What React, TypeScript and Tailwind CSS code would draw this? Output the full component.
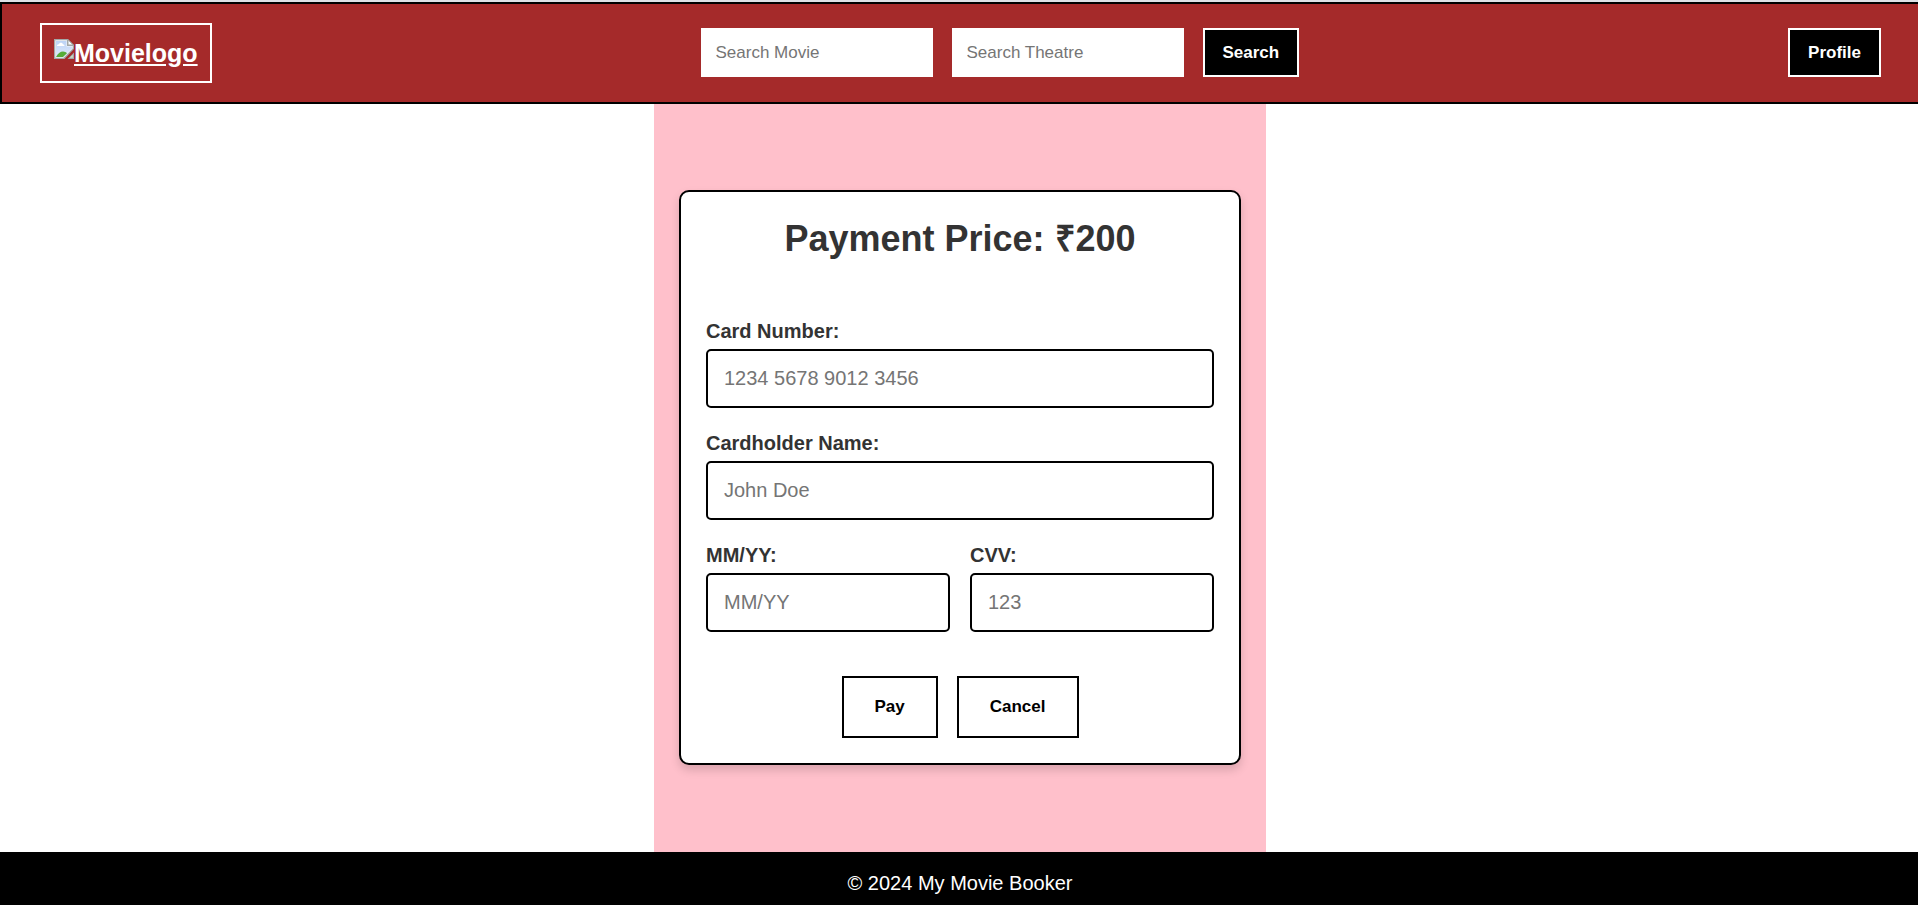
import type { InputHTMLAttributes } from "react";

function BrokenImageIcon() {
  return (
    <svg width="20" height="20" viewBox="0 0 20 20" className="shrink-0" aria-hidden="true">
      <defs>
        <linearGradient id="sky" x1="0" y1="0" x2="0" y2="1">
          <stop offset="0" stopColor="#bcd3f5" />
          <stop offset="1" stopColor="#dfe9fb" />
        </linearGradient>
      </defs>
      <path d="M0 0H14L20 6V10L10.500 20H0Z" fill="#a3a8a8" />
      <path d="M1.300 1.300H13V7H18.700V9.600L9.500 18.700H1.300Z" fill="#f5f8fd" />
      <path d="M2 2H12.500V7.500H18V9.500L9 18H2Z" fill="url(#sky)" />
      <path d="M3 7C3 5.500 4.500 5.300 5 5.300C5.300 3.300 8.500 3.300 8.900 5.300C10 5.300 10.500 6 10.500 7Z" fill="#fff" />
      <path d="M2 18C3.500 14.500 6.500 12.500 9 12.500C10.800 12.500 12 13.300 13 14.200L9 18Z" fill="#55ac38" />
      <path d="M14 0.800V6H19.200Z" fill="#fafafa" stroke="#a3a8a8" strokeWidth="1" />
      <path d="M20 13.500V20H13.500Z" fill="#a3a8a8" />
      <path d="M18.800 15.800V18.800H15.700Z" fill="#cfe0c8" />
    </svg>
  );
}

type FieldProps = InputHTMLAttributes<HTMLInputElement> & { id: string; label: string };

function Field({ id, label, ...rest }: FieldProps) {
  return (
    <div className="mb-6 flex min-w-0 flex-1 flex-col gap-[6px]">
      <label htmlFor={id} className="text-[20px] leading-[23px] font-bold">
        {label}
      </label>
      <input
        id={id}
        className="w-full rounded-[5px] border-2 border-black bg-white px-4 py-4 text-[20px] leading-[23px] text-black placeholder:text-[#757575]"
        {...rest}
      />
    </div>
  );
}

const searchInput =
  "h-[49px] w-[232px] bg-white px-[15px] text-[17px] text-black placeholder:text-[#757575]";
const darkButton =
  "h-[49px] border-2 border-white bg-black px-[18px] text-[17px] font-bold text-white";
const lightButton =
  "h-[62px] border-2 border-black bg-white px-[31px] text-[17px] font-bold text-black";

export default function App() {
  return (
    <div className="flex min-h-screen flex-col border-t-2 border-[#dee1e6] bg-white font-['Liberation_Sans',Arial,sans-serif] text-[#333333]">
      <header className="flex items-center justify-between border-y-2 border-l-2 border-black bg-[#a52a2a] py-[19px] pr-[37px] pl-[38px]">
        <a
          href="#"
          className="flex h-[60px] items-center border-2 border-white px-3 text-[25px] leading-[28px] font-bold text-white"
        >
          <span className="flex items-start">
            <BrokenImageIcon />
            <span className="underline">Movielogo</span>
          </span>
        </a>
        <form className="flex gap-[19px] pb-px" onSubmit={(e) => e.preventDefault()}>
          <input type="text" aria-label="Search Movie" placeholder="Search Movie" className={searchInput} />
          <input type="text" aria-label="Search Theatre" placeholder="Search Theatre" className={searchInput} />
          <button type="submit" className={darkButton}>
            Search
          </button>
        </form>
        <div className="flex pb-px">
          <button type="button" className={darkButton}>
            Profile
          </button>
        </div>
      </header>

      <div className="flex flex-1 justify-center pl-[2px]">
        <main className="flex w-full max-w-[612px] flex-col justify-center bg-[#ffc0cb] px-[25px] pb-[2px]">
          <form
            className="rounded-[10px] border-2 border-black bg-white p-[25px] shadow-[0_5px_10px_rgba(0,0,0,0.15)]"
            onSubmit={(e) => e.preventDefault()}
          >
            <h1 className="mb-[60px] text-center text-[36px] leading-[43px] font-bold">Payment Price: ₹200</h1>
            <Field id="card-number" label="Card Number:" placeholder="1234 5678 9012 3456" />
            <Field id="cardholder" label="Cardholder Name:" placeholder="John Doe" />
            <div className="flex gap-5">
              <Field id="expiry" label="MM/YY:" placeholder="MM/YY" />
              <Field id="cvv" label="CVV:" placeholder="123" />
            </div>
            <div className="mt-5 flex justify-center gap-[19px]">
              <button type="submit" className={lightButton}>
                Pay
              </button>
              <button type="button" className={lightButton}>
                Cancel
              </button>
            </div>
          </form>
        </main>
      </div>

      <footer className="bg-black pt-5 pb-[10px] pl-[2px] text-center text-[20px] leading-[23px] text-white">
        © 2024 My Movie Booker
      </footer>
    </div>
  );
}
